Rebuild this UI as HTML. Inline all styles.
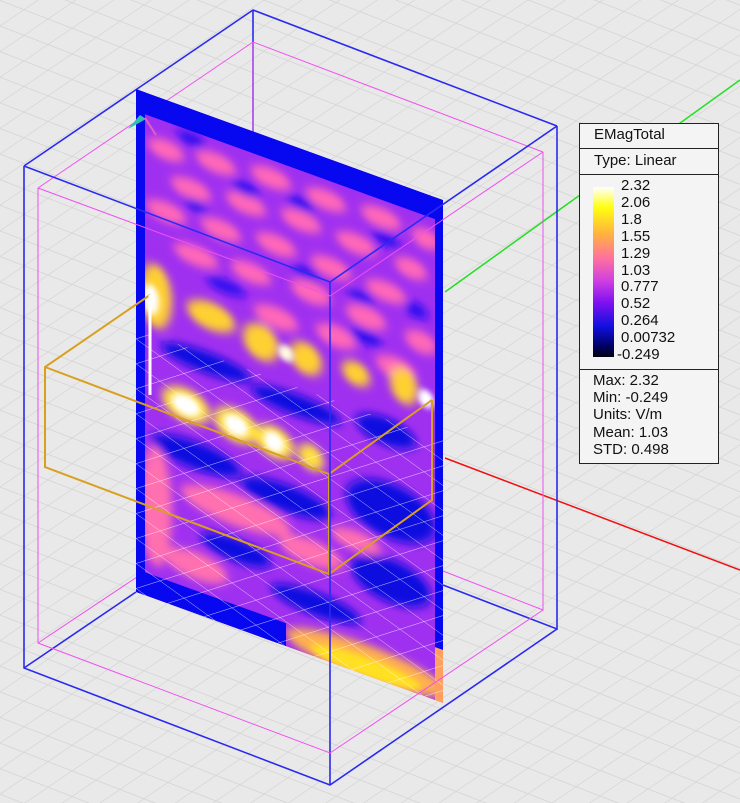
<!DOCTYPE html>
<html><head><meta charset="utf-8"><style>
html,body{margin:0;padding:0;background:#e9e9e9;}
#w{position:relative;width:740px;height:803px;overflow:hidden;font-family:"Liberation Sans",sans-serif;}
svg{position:absolute;left:0;top:0;}
.leg{position:absolute;left:579px;top:123px;width:138px;height:339px;background:#f4f4f4;border:1px solid #222;font-size:15px;color:#111;}
.leg .r{border-bottom:1px solid #222;padding-left:14px;}
.cb{position:absolute;left:13px;top:63px;width:21px;height:170px;background:linear-gradient(#fff 0%,#ffff10 12%,#ffb040 28%,#ff70a0 42%,#d040e0 55%,#8010f0 68%,#1010e0 82%,#000060 94%,#000010 100%);}
.lab{position:absolute;left:41px;top:54px;line-height:16.9px;}
.st{position:absolute;left:13px;top:248px;line-height:17.2px;}
</style></head><body><div id="w">
<svg width="740" height="803" viewBox="0 0 740 803">
<defs>
<pattern id="g" width="24" height="24" patternUnits="userSpaceOnUse" patternTransform="matrix(1,0.387,-1,0.68,0,0)">
<path d="M0 0H24M0 0V24" stroke="#d2d2d2" stroke-width="1.4" fill="none"/>
</pattern>
<pattern id="wg" width="24" height="24" patternUnits="userSpaceOnUse" patternTransform="matrix(1,0.36,-1,0.68,0,0)">
<path d="M0 0H24M0 0V24" stroke="#ffffff" stroke-width="1" fill="none" opacity="0.75"/>
</pattern>
<clipPath id="pc"><rect x="0" y="0" width="307" height="503"/></clipPath>
<filter id="b" x="-20%" y="-20%" width="140%" height="140%"><feGaussianBlur stdDeviation="4.5"/></filter>
<filter id="b2"><feGaussianBlur stdDeviation="3"/></filter>
</defs>
<rect width="740" height="803" fill="#e9e9e9"/>
<rect width="740" height="803" fill="url(#g)"/>
<line x1="445" y1="292" x2="740" y2="80" stroke="#20e020" stroke-width="1.5"/>
<line x1="445" y1="458" x2="740" y2="570" stroke="#f01010" stroke-width="1.5"/>
<polyline points="24,166 253,10 557,126" fill="none" stroke="#2a2af0" stroke-width="1.6"/>
<line x1="253" y1="10" x2="253" y2="140" stroke="#2a2af0" stroke-width="1.6"/>
<polyline points="38,188 253,42 543,152" fill="none" stroke="#f050f0" stroke-width="1"/>
<line x1="253" y1="42" x2="253" y2="140" stroke="#f050f0" stroke-width="1"/>
<polyline points="24,668 136,592" fill="none" stroke="#2a2af0" stroke-width="1.6"/>
<polyline points="38,643 140,575" fill="none" stroke="#f050f0" stroke-width="1"/>
<polyline points="443,585 557,629 557,126" fill="none" stroke="#2a2af0" stroke-width="1.6"/>
<polyline points="543,152 543,610 443,571" fill="none" stroke="#f050f0" stroke-width="1"/>
<g transform="matrix(1,0.3616,0,1,136,89)">
<g clip-path="url(#pc)">
<rect width="307" height="503" fill="#a030f0"/>
<g filter="url(#b)">
<g fill="#ff68b8">
<ellipse cx="30" cy="50" rx="18" ry="10"/><ellipse cx="80" cy="45" rx="20" ry="10"/><ellipse cx="135" cy="40" rx="20" ry="10"/><ellipse cx="190" cy="42" rx="20" ry="10"/><ellipse cx="245" cy="40" rx="20" ry="10"/><ellipse cx="290" cy="45" rx="14" ry="10"/>
<ellipse cx="55" cy="80" rx="20" ry="10"/><ellipse cx="110" cy="75" rx="20" ry="10"/><ellipse cx="165" cy="72" rx="20" ry="10"/><ellipse cx="220" cy="75" rx="20" ry="10"/><ellipse cx="275" cy="80" rx="16" ry="10"/>
<ellipse cx="30" cy="112" rx="20" ry="10"/><ellipse cx="85" cy="110" rx="20" ry="10"/><ellipse cx="140" cy="105" rx="20" ry="10"/><ellipse cx="195" cy="108" rx="20" ry="10"/><ellipse cx="250" cy="112" rx="20" ry="10"/>
<ellipse cx="60" cy="145" rx="22" ry="10"/><ellipse cx="115" cy="142" rx="20" ry="10"/><ellipse cx="175" cy="140" rx="20" ry="11"/><ellipse cx="230" cy="145" rx="20" ry="11"/><ellipse cx="285" cy="150" rx="16" ry="11"/>
<ellipse cx="140" cy="178" rx="22" ry="11"/><ellipse cx="200" cy="175" rx="20" ry="11"/><ellipse cx="260" cy="185" rx="20" ry="11"/>
</g>
<g fill="#3010f0">
<ellipse cx="55" cy="30" rx="14" ry="7"/><ellipse cx="110" cy="60" rx="14" ry="7"/><ellipse cx="165" cy="55" rx="14" ry="7"/><ellipse cx="250" cy="60" rx="14" ry="7"/>
<ellipse cx="60" cy="95" rx="12" ry="6"/><ellipse cx="170" cy="122" rx="14" ry="6"/><ellipse cx="225" cy="127" rx="14" ry="6"/>
<ellipse cx="90" cy="165" rx="20" ry="7"/><ellipse cx="230" cy="165" rx="16" ry="8"/><ellipse cx="280" cy="120" rx="12" ry="8"/>
</g>
<g fill="#ffd030">
<ellipse cx="20" cy="200" rx="16" ry="32"/><ellipse cx="75" cy="200" rx="24" ry="14"/><ellipse cx="125" cy="208" rx="18" ry="18"/><ellipse cx="170" cy="208" rx="16" ry="16"/><ellipse cx="220" cy="205" rx="14" ry="12"/><ellipse cx="268" cy="200" rx="14" ry="18"/>
</g>
<g fill="#1010e0">
<ellipse cx="70" cy="248" rx="45" ry="11"/><ellipse cx="160" cy="258" rx="45" ry="11"/><ellipse cx="250" cy="252" rx="30" ry="14"/>
</g>
<g fill="#ffe040">
<ellipse cx="50" cy="298" rx="24" ry="17"/><ellipse cx="100" cy="300" rx="22" ry="17"/><ellipse cx="138" cy="303" rx="20" ry="16"/><ellipse cx="175" cy="305" rx="13" ry="13"/>
</g>
<g fill="#0c0ce0">
<ellipse cx="60" cy="345" rx="45" ry="14"/><ellipse cx="150" cy="355" rx="45" ry="14"/><ellipse cx="255" cy="330" rx="45" ry="28"/>
<ellipse cx="100" cy="425" rx="35" ry="12"/><ellipse cx="255" cy="400" rx="40" ry="22"/><ellipse cx="180" cy="450" rx="45" ry="12"/>
</g>
<g fill="#ff70b0">
<ellipse cx="20" cy="410" rx="16" ry="60"/><ellipse cx="100" cy="385" rx="55" ry="16"/><ellipse cx="175" cy="400" rx="32" ry="13"/><ellipse cx="60" cy="455" rx="32" ry="14"/><ellipse cx="220" cy="372" rx="25" ry="10"/>
</g>
<ellipse cx="230" cy="490" rx="80" ry="18" fill="#ffb050"/>
</g>
<g filter="url(#b2)">
<ellipse cx="15" cy="205" rx="8" ry="15" fill="#fff"/>
<ellipse cx="50" cy="298" rx="14" ry="10" fill="#fff"/><ellipse cx="100" cy="300" rx="12" ry="10" fill="#fff"/><ellipse cx="138" cy="303" rx="10" ry="10" fill="#fff"/>
<ellipse cx="150" cy="210" rx="8" ry="8" fill="#fffbe0"/><ellipse cx="290" cy="205" rx="8" ry="9" fill="#fff"/>
<ellipse cx="230" cy="495" rx="55" ry="10" fill="#ffe020"/>
</g>
<rect x="0" y="0" width="307" height="22" fill="#0808f0"/>
<rect x="0" y="0" width="9" height="503" fill="#0808f0"/>
<rect x="299" y="0" width="8" height="450" fill="#0808f0"/>
<rect x="0" y="480" width="150" height="23" fill="#0808f0"/>
<rect x="299" y="450" width="8" height="53" fill="#ffa060"/>
<rect x="0" y="240" width="307" height="270" fill="url(#wg)"/>
</g>
</g>
<g fill="none" stroke="#d8a020" stroke-width="2">
<polyline points="150,295 45,367 45,467 329,574 432,500 432,400"/>
<polyline points="45,367 329,474 432,400"/>
<line x1="329" y1="474" x2="329" y2="574"/>
<line x1="150" y1="295" x2="150" y2="395" stroke="#fff" stroke-width="3"/>
</g>
<polyline points="24,166 330,282 557,126" fill="none" stroke="#2a2af0" stroke-width="1.6"/>
<polyline points="24,166 24,668 330,785 557,629" fill="none" stroke="#2a2af0" stroke-width="1.6"/>
<line x1="330" y1="282" x2="330" y2="785" stroke="#2a2af0" stroke-width="1.6"/>
<polyline points="38,188 330,296 543,152" fill="none" stroke="#f050f0" stroke-width="1"/>
<polyline points="38,188 38,643 330,753 543,610" fill="none" stroke="#f050f0" stroke-width="1"/>
<path d="M128 129 L146 119 L140 115 Z" fill="#30c0b0"/>
<path d="M145 118 L156 135" stroke="#e060c0" stroke-width="2"/>
</svg>
<div class="leg">
<div class="r" style="height:24px;line-height:22px;">EMagTotal</div>
<div class="r" style="height:25px;line-height:24px;">Type: Linear</div>
<div class="cb"></div>
<div class="lab">2.32<br>2.06<br>1.8<br>1.55<br>1.29<br>1.03<br>0.777<br>0.52<br>0.264<br>0.00732<br><span style="margin-left:-4px">-0.249</span></div>
<div style="position:absolute;left:0;top:245px;width:138px;border-top:1px solid #222;"></div>
<div class="st">Max: 2.32<br>Min: -0.249<br>Units: V/m<br>Mean: 1.03<br>STD: 0.498</div>
</div>
</div></body></html>
